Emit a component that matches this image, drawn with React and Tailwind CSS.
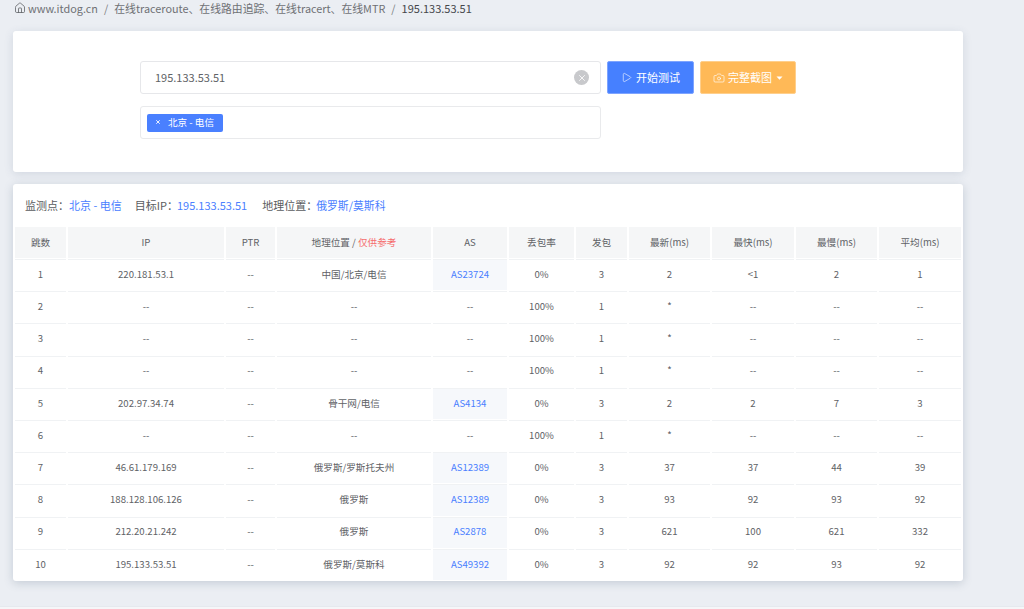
import React from "react";
import { Home, Play, Camera, X } from "lucide-react";

const cols = [51, 156, 49, 154, 74, 65, 51, 81, 82, 81, 82];
const heads = ["跳数", "IP", "PTR", null, "AS", "丢包率", "发包", "最新(ms)", "最快(ms)", "最慢(ms)", "平均(ms)"];
const d = "--";
const rows = [
  ["1", "220.181.53.1", d, "中国/北京/电信", "AS23724", "0%", "3", "2", "<1", "2", "1"],
  ["2", d, d, d, d, "100%", "1", "*", d, d, d],
  ["3", d, d, d, d, "100%", "1", "*", d, d, d],
  ["4", d, d, d, d, "100%", "1", "*", d, d, d],
  ["5", "202.97.34.74", d, "骨干网/电信", "AS4134", "0%", "3", "2", "2", "7", "3"],
  ["6", d, d, d, d, "100%", "1", "*", d, d, d],
  ["7", "46.61.179.169", d, "俄罗斯/罗斯托夫州", "AS12389", "0%", "3", "37", "37", "44", "39"],
  ["8", "188.128.106.126", d, "俄罗斯", "AS12389", "0%", "3", "93", "92", "93", "92"],
  ["9", "212.20.21.242", d, "俄罗斯", "AS2878", "0%", "3", "621", "100", "621", "332"],
  ["10", "195.133.53.51", d, "俄罗斯/莫斯科", "AS49392", "0%", "3", "92", "92", "93", "92"],
];

export default function App() {
  return (
    <div className="h-[609px] w-[1024px] overflow-hidden bg-[#ebeef3] text-[#606266] font-['Noto_Sans_CJK_SC','Liberation_Sans',sans-serif]">
      <div className="flex h-[16px] items-center pl-[14px] text-[10.85px] text-[#6f7175]">
        <Home size={12} strokeWidth={1.6} className="mr-[2px] text-[#606266]" />
        <span>www.itdog.cn</span>
        <span className="mx-[6px] text-[#7d7f83]">/</span>
        <span>在线traceroute、在线路由追踪、在线tracert、在线MTR</span>
        <span className="mx-[6px] text-[#7d7f83]">/</span>
        <span className="text-[11px] text-[#45474b]">195.133.53.51</span>
      </div>

      <div className="ml-[13px] mt-[15px] flex h-[141px] w-[950px] gap-[6px] rounded-[3px] bg-white pl-[127px] pt-[30px] shadow-[0_2px_10px_rgba(60,80,110,0.14)]">
        <div className="flex w-[461px] flex-col gap-[12px]">
          <div className="flex h-[33px] items-center justify-between rounded-[3px] border border-[#e6e7ea] pl-[14px] pr-[11px] text-[11px]">
            <span>195.133.53.51</span>
            <span className="flex h-[15px] w-[15px] items-center justify-center rounded-full bg-[#c8c9cc] text-white">
              <X size={10} strokeWidth={2} />
            </span>
          </div>
          <div className="flex h-[33px] items-center rounded-[3px] border border-[#e9eaec] pl-[6px]">
            <span className="flex h-[18px] w-[76px] items-center gap-[7px] rounded-[2px] bg-[#4a80ff] pb-[1px] pl-[8px] text-[9.6px] text-white">
              <X size={6} strokeWidth={3.5} />
              <span>北京 - 电信</span>
            </span>
          </div>
        </div>
        <button className="flex h-[33px] w-[87px] items-center justify-center gap-[4px] rounded-[2px] border border-[#7ea4ff] bg-[#4680ff] text-[11px] text-white">
          <Play size={11} strokeWidth={1.3} />
          <span>开始测试</span>
        </button>
        <button className="flex h-[33px] w-[96px] items-center justify-center gap-[3px] rounded-[2px] border border-[#ffcf8c] bg-[#ffb957] text-[11px] text-white">
          <Camera size={12} strokeWidth={1.3} />
          <span>完整截图</span>
          <svg width="7" height="4" viewBox="0 0 7 4" className="ml-[1px]">
            <path d="M0.5 0.5h6L3.5 3.7z" fill="white" />
          </svg>
        </button>
      </div>

      <div className="ml-[13px] mt-[12px] h-[397px] w-[950px] rounded-[3px] bg-white shadow-[0_2px_10px_rgba(60,80,110,0.22)]">
        <div className="flex h-[41px] items-center pl-[12px] pt-[1px] text-[11px] text-[#5a5c60]">
          <span>监测点：</span>
          <span className="text-[#4a80ff]">北京 - 电信</span>
          <span className="ml-[13px]">目标IP：</span>
          <span className="-ml-[1px] text-[#4a80ff]">195.133.53.51</span>
          <span className="ml-[15px]">地理位置：</span>
          <span className="-ml-[1px] text-[10.85px] text-[#4a80ff]">俄罗斯/莫斯科</span>
        </div>
        <table className="w-[950px] table-fixed border-separate border-spacing-[2px] text-center text-[9.6px] text-[#606266]">
          <colgroup>
            {cols.map((w, i) => (
              <col key={i} style={{ width: w }} />
            ))}
          </colgroup>
          <thead>
            <tr>
              {heads.map((h, i) => (
                <th key={i} className="h-[31px] bg-[#f5f6f7] font-normal text-[#606266] shadow-[0_1px_0_#fff,0_2px_0_#f0f2f4]">
                  {h ?? (
                    <>
                      地理位置 / <span className="text-[#f56c6c]">仅供参考</span>
                    </>
                  )}
                </th>
              ))}
            </tr>
          </thead>
          <tbody>
            {rows.map((r, ri) => (
              <tr key={ri}>
                {r.map((c, i) => (
                  <td
                    key={i}
                    className={
                      "h-[30.2px] pb-[2px] " +
                      (ri < 9 ? "shadow-[0_1px_0_#fff,0_2px_0_#f0f2f4] " : "") +
                      (i === 4 && c !== d ? "bg-[#f6f8fb] text-[#4a80ff]" : "")
                    }
                  >
                    {c}
                  </td>
                ))}
              </tr>
            ))}
          </tbody>
        </table>
      </div>
      <div className="mt-[25px] h-[3px] border-t border-[#e6e9ee] bg-[#f5f6f8]" />
    </div>
  );
}
